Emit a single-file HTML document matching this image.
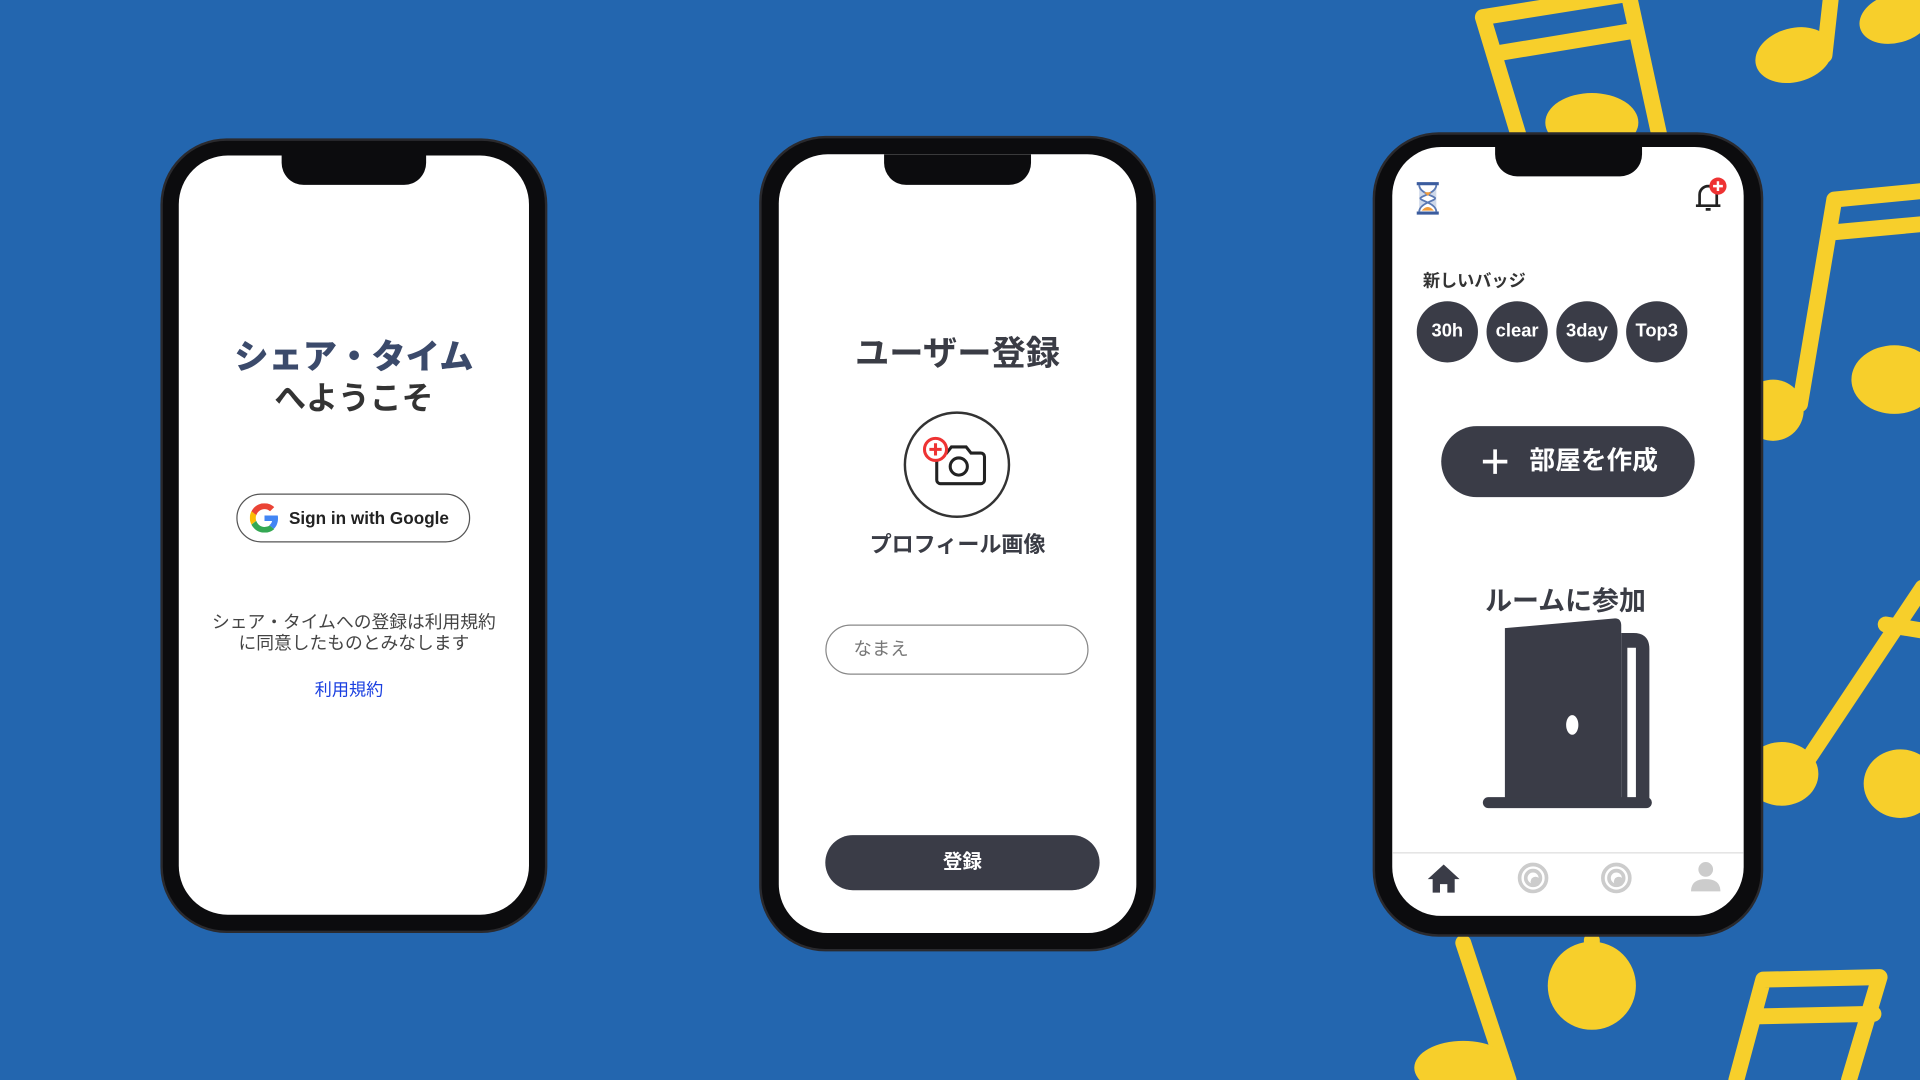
<!DOCTYPE html>
<html><head><meta charset="utf-8">
<style>
*{margin:0;padding:0;box-sizing:border-box}
html,body{width:1920px;height:1080px;overflow:hidden;background:#2366af}
#w{position:absolute;left:0;top:0;width:1568px;height:882px;transform:scale(1.22449);transform-origin:0 0;font-family:"Liberation Sans","Noto Sans CJK JP",sans-serif}
.ph{position:absolute;background:#0c0c0e;border-radius:52px;box-shadow:0 0 0 2px #2a2a2e}
.sc{position:absolute;background:#fff;border-radius:40px;overflow:hidden}
.notch{position:absolute;background:#0c0c0e;border-radius:0 0 18px 18px}
.abs{position:absolute}
.c{text-align:center}
.badge{position:absolute;width:50px;height:50px;border-radius:50%;background:#3a3c47;color:#fff;font-weight:bold;font-size:15px;line-height:50px;text-align:center}
</style></head><body><div id="w">
<svg class="abs" style="left:0;top:0" width="1568" height="882">
<g stroke="#f7cf2b" stroke-width="13" fill="none" stroke-linecap="round">
<path d="M1211 14 L1240 110 M1211 14 L1330 -5 M1220 44 L1335 25 M1330 -5 L1355 110"/>
<path d="M1495 0 L1490 45"/>
<path d="M1498 163 L1470 330 M1498 163 L1570 156 M1494 190 L1570 183"/>
<path d="M1570 480 L1478 618 M1540 510 L1570 515"/>
<path d="M1195 770 L1232 882 M1300 768 L1300 800"/>
<path d="M1440 800 L1418 882 M1440 800 L1535 798 M1438 830 L1530 828 M1535 798 L1510 882"/>
</g>
<g fill="#f7cf2b">
<ellipse cx="1465" cy="45" rx="32" ry="22" transform="rotate(-15 1465 45)"/>
<ellipse cx="1548" cy="15" rx="30" ry="20" transform="rotate(-15 1548 15)"/>
<ellipse cx="1300" cy="100" rx="38" ry="24"/>
<ellipse cx="1547" cy="310" rx="35" ry="28"/>
<ellipse cx="1448" cy="335" rx="25" ry="25"/>
<ellipse cx="1455" cy="632" rx="30" ry="26"/>
<ellipse cx="1552" cy="640" rx="30" ry="28"/>
<ellipse cx="1300" cy="805" rx="36" ry="36"/>
<ellipse cx="1195" cy="872" rx="40" ry="22"/>
</g>
</svg>

<!-- Phone 1 -->
<div class="ph" style="left:133px;top:115px;width:312px;height:645px"></div>
<div class="sc" style="left:146px;top:127px;width:286px;height:620px">
 <div class="notch" style="left:84px;top:0;width:118px;height:24px"></div>
 <div class="abs c" style="left:0;width:286px;top:143px;font-size:28px;font-weight:900;color:#3b4a6b;letter-spacing:0px">シェア・タイム</div>
 <div class="abs c" style="left:0;width:286px;top:178px;font-size:26px;font-weight:bold;color:#333">へようこそ</div>
 <div class="abs" style="left:47px;top:276px;width:191px;height:40px;border:1px solid #555;border-radius:20px;font-size:14px;font-weight:bold;color:#222;line-height:38px;padding-left:42px">Sign in with Google</div>
 <svg class="abs" style="left:58px;top:284px" width="24" height="24" viewBox="0 0 48 48"><path fill="#EA4335" d="M24 9.5c3.5 0 6.6 1.2 9.1 3.6l6.8-6.8C35.8 2.4 30.3 0 24 0 14.6 0 6.6 5.4 2.7 13.3l7.9 6.2C12.5 13.6 17.8 9.5 24 9.5z"/><path fill="#4285F4" d="M46.1 24.5c0-1.6-.1-3.1-.4-4.5H24v9h12.4c-.5 2.9-2.2 5.3-4.6 7l7.5 5.8c4.4-4 6.8-10 6.8-17.3z"/><path fill="#FBBC05" d="M10.5 28.7c-.5-1.5-.8-3-.8-4.7s.3-3.2.8-4.7l-7.9-6.2C1 16.5 0 20.1 0 24s1 7.5 2.7 10.7l7.8-6z"/><path fill="#34A853" d="M24 48c6.5 0 11.9-2.1 15.9-5.8l-7.5-5.8c-2.1 1.4-4.9 2.3-8.4 2.3-6.2 0-11.5-4.2-13.4-9.9l-7.9 6.1C6.6 42.6 14.6 48 24 48z"/></svg>
 <div class="abs c" style="left:0;width:286px;top:374px;font-size:14.5px;color:#444;line-height:17px">シェア・タイムへの登録は利用規約<br>に同意したものとみなします</div>
 <div class="abs c" style="left:0;width:278px;top:426px;font-size:14px;color:#1a3fe0">利用規約</div>
</div>

<!-- Phone 2 -->
<div class="ph" style="left:622px;top:113px;width:320px;height:662px"></div>
<div class="sc" style="left:636px;top:126px;width:292px;height:636px">
 <div class="notch" style="left:86px;top:0;width:120px;height:25px"></div>
 <div class="abs c" style="left:0;width:292px;top:141px;font-size:28px;font-weight:bold;color:#3a3c45">ユーザー登録</div>
 <div class="abs" style="left:102px;top:210px;width:87px;height:87px;border:2px solid #333;border-radius:50%"></div>
 <svg class="abs" style="left:115px;top:228px" width="60" height="50" viewBox="0 0 60 50">
  <path d="M14 16 h8 l4 -5 h12 l4 5 h8 a3 3 0 0 1 3 3 v19 a3 3 0 0 1 -3 3 h-33 a3 3 0 0 1 -3 -3 z" fill="none" stroke="#222" stroke-width="2.5"/>
  <circle cx="32" cy="27" r="7" fill="none" stroke="#222" stroke-width="2.5"/>
  <circle cx="13" cy="13" r="9" fill="#fff" stroke="#e33" stroke-width="2.5"/>
  <path d="M13 8 v10 M8 13 h10" stroke="#e33" stroke-width="2.5"/>
 </svg>
 <div class="abs c" style="left:0;width:292px;top:305px;font-size:18px;font-weight:bold;color:#3a3c45">プロフィール画像</div>
 <div class="abs" style="left:38px;top:384px;width:215px;height:41px;border:1px solid #888;border-radius:21px;font-size:15px;color:#777;line-height:39px;padding-left:22px">なまえ</div>
 <div class="abs c" style="left:38px;top:556px;width:224px;height:45px;background:#3a3c47;border-radius:23px;font-size:16px;font-weight:bold;color:#fff;line-height:45px">登録</div>
</div>

<!-- Phone 3 -->
<div class="ph" style="left:1123px;top:110px;width:315px;height:653px"></div>
<div class="sc" style="left:1137px;top:120px;width:287px;height:628px">
 <div class="notch" style="left:84px;top:0;width:120px;height:24px"></div>
 <svg class="abs" style="left:17px;top:28px" width="24" height="28" viewBox="0 0 24 28">
  <path d="M3 2 h18 M3 26 h18" stroke="#3b5c9e" stroke-width="2.5"/>
  <path d="M5 3 C5 10 18 12 18 14 C18 16 5 18 5 25 M19 3 C19 10 6 12 6 14 C6 16 19 18 19 25" fill="#cfd9ea" stroke="#5b79b3" stroke-width="1.5"/>
  <path d="M9 9 h6 l-3 3z M7 24 q5 -6 10 0z" fill="#f29b38"/>
 </svg>
 <svg class="abs" style="left:242px;top:22px" width="36" height="36" viewBox="0 0 36 36">
  <path d="M6 26 h20 M9 26 v-9 a7 7 0 0 1 14 0 v9 M14 29 h4" fill="none" stroke="#222" stroke-width="2.2"/>
  <circle cx="24" cy="10" r="7" fill="#e33"/><path d="M24 6 v8 M20 10 h8" stroke="#fff" stroke-width="2"/>
 </svg>
 <div class="abs" style="left:25px;top:99px;font-size:14px;font-weight:bold;color:#333">新しいバッジ</div>
 <div class="badge" style="left:20px;top:126px">30h</div>
 <div class="badge" style="left:77px;top:126px">clear</div>
 <div class="badge" style="left:134px;top:126px">3day</div>
 <div class="badge" style="left:191px;top:126px">Top3</div>
 <div class="abs" style="left:40px;top:228px;width:207px;height:58px;background:#3a3c47;border-radius:29px;color:#fff;font-size:21px;font-weight:bold;line-height:58px;padding-left:72px">部屋を作成</div>
 <svg class="abs" style="left:72px;top:245px" width="24" height="24"><path d="M12 2 v20 M2 12 h20" stroke="#fff" stroke-width="3"/></svg>
 <div class="abs c" style="left:0;width:283px;top:353px;font-size:22px;font-weight:bold;color:#3a3c45">ルームに参加</div>
 <svg class="abs" style="left:72px;top:383px" width="142" height="160" viewBox="0 0 142 160">
  <path d="M20 10 L110 2 Q115 2 115 8 V153 H20 Z" fill="#3a3c47"/>
  <path d="M115 14 H125 Q138 14 138 27 V153 H127 V26 H120 V153 H115Z" fill="#3a3c47"/>
  <rect x="2" y="148" width="138" height="9" rx="4.5" fill="#3a3c47"/>
  <ellipse cx="75" cy="89" rx="5" ry="8" fill="#fff"/>
 </svg>
 <div class="abs" style="left:0;top:576px;width:287px;height:1px;background:#ddd"></div>
 <svg class="abs" style="left:28px;top:584px" width="28" height="26" viewBox="0 0 28 26"><path d="M14 2 L27 14 H23 V25 H17 V18 H11 V25 H5 V14 H1 Z" fill="#3a3c47"/></svg>
 <svg class="abs" style="left:101px;top:584px" width="28" height="26" viewBox="0 0 28 26"><circle cx="14" cy="13" r="11" fill="none" stroke="#ccc" stroke-width="3"/><circle cx="14" cy="13" r="6" fill="none" stroke="#ccc" stroke-width="3"/><circle cx="16" cy="16" r="4" fill="#ccc"/></svg>
 <svg class="abs" style="left:169px;top:584px" width="28" height="26" viewBox="0 0 28 26"><circle cx="14" cy="13" r="11" fill="none" stroke="#ccc" stroke-width="3"/><circle cx="14" cy="13" r="6" fill="none" stroke="#ccc" stroke-width="3"/><circle cx="16" cy="16" r="4" fill="#ccc"/></svg>
 <svg class="abs" style="left:242px;top:582px" width="28" height="28" viewBox="0 0 28 28"><circle cx="14" cy="8" r="6" fill="#ccc"/><path d="M2 26 Q2 16 14 16 Q26 16 26 26Z" fill="#ccc"/></svg>
</div>
</div></body></html>
